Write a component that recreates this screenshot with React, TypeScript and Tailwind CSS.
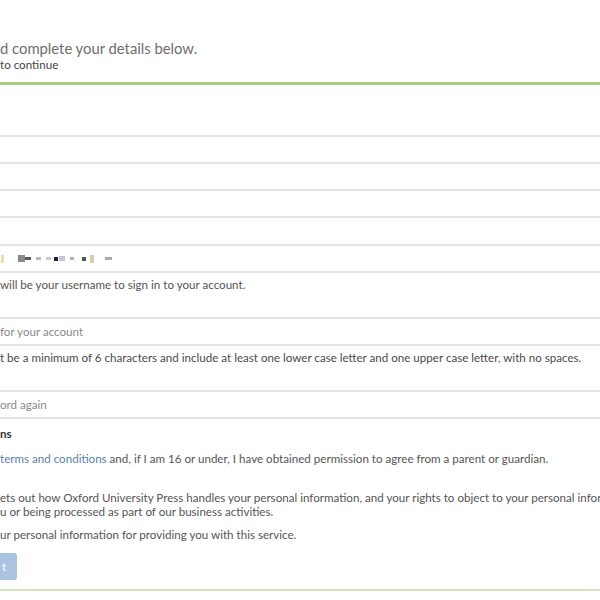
import React from 'react'

const font = { fontFamily: 'Lato, "Open Sans", sans-serif' }

function Field({ children, tall = false }: { children?: React.ReactNode; tall?: boolean }) {
  return (
    <div className={`border-t-2 border-[#e4e4e4] flex items-center text-[11.6px] text-[#8a8a8a] ${tall ? 'h-[28px]' : 'h-[27px]'}`}>
      {children}
    </div>
  )
}

// pixelated bits standing in for the blurred email address
const blur = [
  { w: 3, h: 8, c: '#e9dcb0', ml: 1 },
  { w: 7, h: 7, c: '#8a8a8a', ml: 14 },
  { w: 6, h: 3, c: '#5a5a5a', ml: 0 },
  { w: 5, h: 3, c: '#b8b8c8', ml: 5 },
  { w: 5, h: 3, c: '#c9c9d8', ml: 5 },
  { w: 4, h: 4, c: '#222', ml: 3 },
  { w: 6, h: 5, c: '#c8c0dc', ml: 1 },
  { w: 4, h: 3, c: '#b0b0c0', ml: 5 },
  { w: 4, h: 4, c: '#555', ml: 8 },
  { w: 4, h: 8, c: '#d8cfa8', ml: 4 },
  { w: 7, h: 3, c: '#aaa', ml: 11 },
]

export default function App() {
  return (
    <div className="w-[600px] h-[600px] bg-white overflow-hidden" style={font}>
      <div className="h-[82px] pt-[39px]">
        <h1 className="text-[14.8px] leading-[18px] text-[#6e6e6e] whitespace-nowrap">d complete your details below.</h1>
        <p className="text-[11.6px] leading-[14px] text-[#444] mt-[1px]">to continue</p>
      </div>
      <div className="h-[3px] bg-[#a9cd86]" />
      <div className="h-[50px]" />
      <Field />
      <Field />
      <Field />
      <Field tall />
      <Field>
        <div className="flex items-center">
          {blur.map((b, i) => (
            <span key={i} className="inline-block" style={{ width: b.w, height: b.h, background: b.c, marginLeft: b.ml }} />
          ))}
        </div>
      </Field>
      <div className="border-t-2 border-[#e4e4e4] h-[46px] pt-[4px] text-[11.6px] leading-[16px] text-[#555]">
        will be your username to sign in to your account.
      </div>
      <Field>for your account</Field>
      <div className="border-t-2 border-[#e4e4e4] h-[46px] pt-[4px] text-[11.6px] leading-[16px] text-[#4a4a4a] whitespace-nowrap">
        t be a minimum of 6 characters and include at least one lower case letter and one upper case letter, with no spaces.
      </div>
      <Field>ord again</Field>
      <div className="border-t-2 border-[#e4e4e4] pt-[8px] text-[11.6px] leading-[14px] text-[#555]">
        <p className="font-bold text-[#333]">ns</p>
        <p className="mt-[11px] whitespace-nowrap">
          <span className="text-[#5b7fa8]">terms and conditions</span> and, if I am 16 or under, I have obtained permission to agree from a parent or guardian.
        </p>
        <p className="mt-[25px] whitespace-nowrap leading-[14px]">
          ets out how Oxford University Press handles your personal information, and your rights to object to your personal information
          <br />
          u or being processed as part of our business activities.
        </p>
        <p className="mt-[9px] whitespace-nowrap">ur personal information for providing you with this service.</p>
        <div className="mt-[11px] w-[17px] h-[27px] rounded-r-[3px] bg-[#a9c3e0] flex items-center pl-[2px] text-white text-[12px]">t</div>
      </div>
      <div className="mt-[9px] h-[2px] bg-[#d2e5c0]" />
    </div>
  )
}
